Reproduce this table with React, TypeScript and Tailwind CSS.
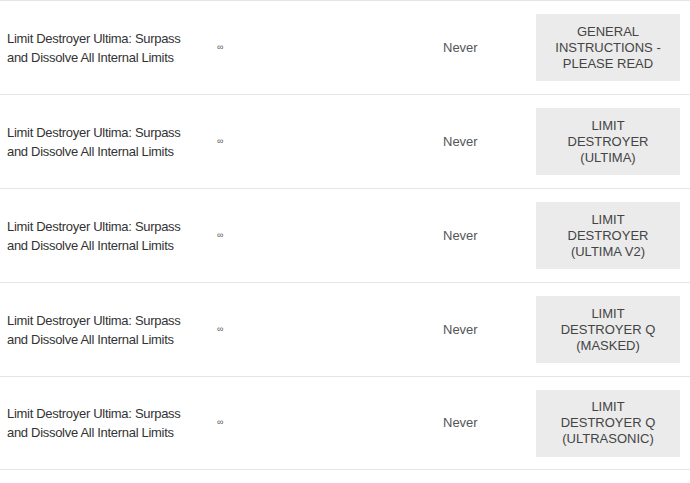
const rows = [
  ["GENERAL", "INSTRUCTIONS -", "PLEASE READ"],
  ["LIMIT", "DESTROYER", "(ULTIMA)"],
  ["LIMIT", "DESTROYER", "(ULTIMA V2)"],
  ["LIMIT", "DESTROYER Q", "(MASKED)"],
  ["LIMIT", "DESTROYER Q", "(ULTRASONIC)"],
];

const App = () => {
  return (
    <div
      className="w-[690px] h-[483px] bg-white overflow-hidden"
      style={{ fontFamily: '"Liberation Sans", Arial, sans-serif' }}
    >
      {rows.map((label, i) => (
        <div
          key={i}
          className="flex items-center h-[94px] border-t border-[#e6e6e6] last:border-b"
        >
          <div className="w-[217px] pl-[7px] pr-[20px] text-[13px] leading-[19px] tracking-[-0.3px] text-[#333]">
            Limit Destroyer Ultima: Surpass and Dissolve All Internal Limits
          </div>
          <div className="w-[226px] text-[9px] text-[#555]">∞</div>
          <div className="w-[93px] text-[13px] text-[#555]">Never</div>
          <div className="w-[144px] h-[67px] bg-[#ebebeb] flex flex-col items-center justify-center text-[13px] leading-[16px] text-[#444] text-center">
            {label.map((l) => (
              <span key={l}>{l}</span>
            ))}
          </div>
        </div>
      ))}
    </div>
  );
};

export default App;
